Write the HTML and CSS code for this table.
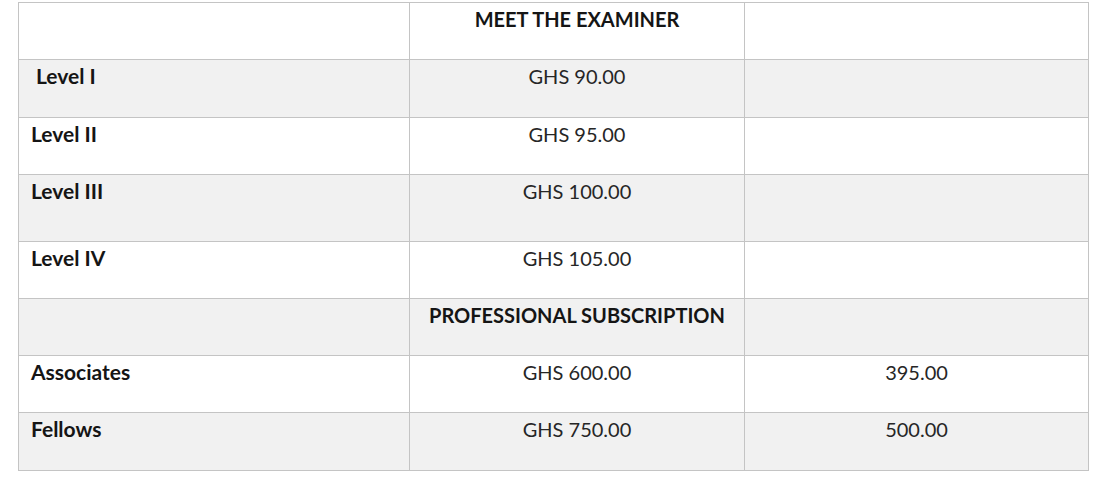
FILE: index.html
```html
<!DOCTYPE html>
<html>
<head>
<meta charset="utf-8">
<link rel="stylesheet" href="styles.css">
</head>
<body>
<table class="fees">
  <colgroup>
    <col class="c1"><col class="c2"><col class="c3">
  </colgroup>
  <tr class="row">
    <td></td><td class="mid head">MEET THE EXAMINER</td><td></td>
  </tr>
  <tr class="row alt wide">
    <td class="label indent">Level I</td><td class="mid">GHS 90.00</td><td></td>
  </tr>
  <tr class="row">
    <td class="label">Level II</td><td class="mid">GHS 95.00</td><td></td>
  </tr>
  <tr class="row alt tall">
    <td class="label">Level III</td><td class="mid">GHS 100.00</td><td></td>
  </tr>
  <tr class="row">
    <td class="label">Level IV</td><td class="mid">GHS 105.00</td><td></td>
  </tr>
  <tr class="row alt">
    <td></td><td class="mid head">PROFESSIONAL SUBSCRIPTION</td><td></td>
  </tr>
  <tr class="row">
    <td class="label">Associates</td><td class="mid">GHS 600.00</td><td class="mid">395.00</td>
  </tr>
  <tr class="row alt wide">
    <td class="label">Fellows</td><td class="mid">GHS 750.00</td><td class="mid">500.00</td>
  </tr>
</table>
</body>
</html>
```
FILE: styles.css
```css
html, body {
  margin: 0;
  padding: 0;
  background: #ffffff;
}
body {
  font-family: "Lato", "Open Sans", sans-serif;
  color: #262626;
}
.fees {
  border-collapse: collapse;
  margin: 2px 0 0 18px;
  table-layout: fixed;
  width: 1070px;
}
.c1 { width: 391px; }
.c2 { width: 335px; }
.c3 { width: 344px; }
.fees td {
  border: 1px solid #c4c4c4;
  height: 57px;
  padding: 4px 12px 0;
  vertical-align: top;
  font-size: 20px;
  line-height: 24px;
  box-sizing: border-box;
}
.row.wide td { height: 58px; }
.row.tall td { height: 67px; }
.alt td { background: #f1f1f1; }
.label {
  font-weight: 700;
  font-size: 21px !important;
  color: #151515;
}
.indent { padding-left: 17px !important; }
.mid {
  text-align: center;
}
.head {
  font-weight: 700;
  color: #151515;
}
```
